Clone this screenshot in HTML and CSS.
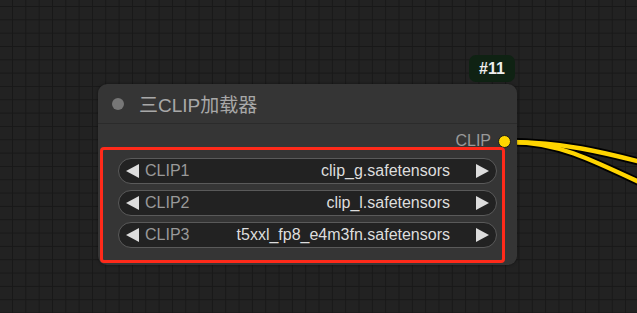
FILE: index.html
```html
<!DOCTYPE html>
<html lang="en">
<head>
    <meta charset="UTF-8">
    <title>三CLIP加载器</title>
    <link rel="stylesheet" href="styles.css">
</head>
<body>
    <div class="canvas">
        <svg class="links" width="637" height="313">
            <path class="link-shadow" d="M511 142 C 560 142, 600 151, 660 167"/>
            <path class="link-shadow" d="M511 142 C 555 142, 585 156, 660 192"/>
            <path class="link" d="M511 142 C 560 142, 600 151, 660 167"/>
            <path class="link" d="M511 142 C 555 142, 585 156, 660 192"/>
        </svg>

        <div class="badge">#11</div>

        <div class="node">
            <div class="node-title">
                <span class="title-dot"></span>
                <span class="title-text">三CLIP加载器</span>
            </div>
            <div class="node-body">
                <div class="output-row">
                    <span class="output-label">CLIP</span>
                    <span class="slot"></span>
                </div>
                <div class="widgets">
                    <div class="combo">
                        <svg class="arrow" width="15" height="16" viewBox="0 0 15 16"><polygon points="14,1 14,15 1,8"/></svg>
                        <span class="combo-label">CLIP1</span>
                        <span class="combo-value">clip_g.safetensors</span>
                        <svg class="arrow" width="15" height="16" viewBox="0 0 15 16"><polygon points="1,1 1,15 14,8"/></svg>
                    </div>
                    <div class="combo">
                        <svg class="arrow" width="15" height="16" viewBox="0 0 15 16"><polygon points="14,1 14,15 1,8"/></svg>
                        <span class="combo-label">CLIP2</span>
                        <span class="combo-value">clip_l.safetensors</span>
                        <svg class="arrow" width="15" height="16" viewBox="0 0 15 16"><polygon points="1,1 1,15 14,8"/></svg>
                    </div>
                    <div class="combo">
                        <svg class="arrow" width="15" height="16" viewBox="0 0 15 16"><polygon points="14,1 14,15 1,8"/></svg>
                        <span class="combo-label">CLIP3</span>
                        <span class="combo-value">t5xxl_fp8_e4m3fn.safetensors</span>
                        <svg class="arrow" width="15" height="16" viewBox="0 0 15 16"><polygon points="1,1 1,15 14,8"/></svg>
                    </div>
                </div>
            </div>
        </div>
    </div>
</body>
</html>
```

FILE: styles.css
```css
* {
    margin: 0;
    padding: 0;
    box-sizing: border-box;
}

body {
    font-family: 'Liberation Sans', Arial, 'Noto Sans CJK SC', sans-serif;
    background: #222;
    overflow: hidden;
}

.canvas {
    position: relative;
    width: 637px;
    height: 313px;
    background-color: #222;
    background-image:
        linear-gradient(to right, #181818 1px, transparent 1px),
        linear-gradient(to bottom, #181818 1px, transparent 1px);
    background-size: 13.333px 13.333px;
    background-position: 12px 6px;
}

.links {
    position: absolute;
    left: 0;
    top: 0;
}

.link-shadow {
    fill: none;
    stroke: #000;
    stroke-width: 8;
}

.link {
    fill: none;
    stroke: #ffd500;
    stroke-width: 4.5;
}

.badge {
    position: absolute;
    left: 469px;
    top: 55px;
    width: 46px;
    height: 27px;
    border-radius: 7px;
    background: #0f2213;
    color: #eee;
    font-weight: bold;
    font-size: 16px;
    display: flex;
    align-items: center;
    justify-content: center;
}

.node {
    position: absolute;
    left: 98px;
    top: 84px;
    width: 419px;
    height: 181px;
    background: #353535;
    border-radius: 9px;
    box-shadow: 0 0 3px rgba(0, 0, 0, 0.5);
}

.node-title {
    height: 40px;
    display: flex;
    align-items: center;
    padding-left: 14px;
    border-bottom: 1px solid #2b2b2b;
}

.title-dot {
    width: 12px;
    height: 12px;
    border-radius: 50%;
    background: #777;
    margin-right: 15px;
}

.title-text {
    font-family: 'Liberation Sans', 'Noto Sans CJK SC', sans-serif;
    font-size: 19px;
    color: #a8a8a8;
}

.node-body {
    padding-left: 2px;
}

.output-row {
    height: 34px;
    display: flex;
    align-items: center;
    justify-content: flex-end;
    padding-right: 6px;
}

.output-label {
    font-size: 16px;
    color: #999;
    margin-right: 7px;
}

.slot {
    width: 13px;
    height: 13px;
    border-radius: 50%;
    background: #ffd500;
    border: 1.5px solid #1a1a1a;
}

/* red highlight round the widget list, drawn over the output row */
.widgets {
    position: relative;
    margin-top: -11px;
    width: 405px;
    height: 116px;
    border: 3px solid #ff2a1a;
    border-radius: 4px;
    padding: 8px 5px 0 15px;
    display: flex;
    flex-direction: column;
    gap: 6px;
}

.combo {
    height: 26px;
    background: #222;
    border: 1px solid #5a5a5a;
    border-radius: 13px;
    display: flex;
    align-items: center;
    padding: 0 6px;
    font-size: 16px;
}

.arrow {
    fill: #ddd;
    flex-shrink: 0;
}

.combo-label {
    color: #999;
    margin-left: 5px;
}

.combo-value {
    color: #ddd;
    margin-left: auto;
    margin-right: 25px;
}
```
